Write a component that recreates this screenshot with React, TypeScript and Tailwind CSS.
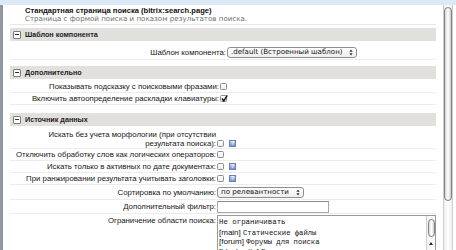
import React from 'react';

interface RowProps {
  label: React.ReactNode;
  labelWidth: string;
  height: string;
  align?: 'center' | 'end' | 'start';
  children?: React.ReactNode;
}

function Checkbox({ checked }: { checked?: boolean }) {
  return (
    <span className="relative inline-block w-[7px] h-[7px] border border-[#8c8c8c] rounded-[1.5px] bg-gradient-to-b from-white to-[#ececec] shrink-0">
      {checked && (
        <svg viewBox="0 0 10 10" className="absolute left-0 -top-[1px] w-[7px] h-[7px]">
          <path d="M1.5 5 L4 8.5 L9 0.5" fill="none" stroke="#111" strokeWidth="2" />
        </svg>
      )}
    </span>
  );
}

function Help() {
  return (
    <span className="inline-flex items-center justify-center w-[7px] h-[7px] ml-[5px] border border-[#6a80bd] bg-gradient-to-b from-[#c3cff0] to-[#7d93cf] text-white text-[5px] leading-none font-bold font-['Liberation_Sans',Arial,sans-serif] shrink-0">
      ?
    </span>
  );
}

function SectionBar({ title }: { title: string }) {
  return (
    <div className="h-[13px] bg-[#e1e0dd] flex items-center">
      <span className="ml-[3px] w-[8px] h-[8px] border border-[#7a7a7a] rounded-[1px] bg-white flex items-center justify-center">
        <span className="w-[4px] h-[1px] bg-[#333]" />
      </span>
      <span className="ml-[4px] text-[7.2px] leading-none font-bold text-[#1d1d1d]">{title}</span>
    </div>
  );
}

function Row({ label, labelWidth, height, align = 'center', children }: RowProps) {
  const items = align === 'end' ? 'items-end' : align === 'start' ? 'items-start' : 'items-center';
  return (
    <div className={`flex ${items} border-b border-[#ececec] ${height}`}>
      <div className={`${labelWidth} shrink-0 text-right text-[7.8px] leading-[9px] text-[#161616] whitespace-nowrap`}>
        {label}
      </div>
      <div className="flex items-center ml-[1px]">{children}</div>
    </div>
  );
}

function Select({ text, width }: { text: string; width: string }) {
  return (
    <div className={`${width} h-[11px] border border-[#8f8f8f] rounded-[3px] bg-gradient-to-b from-white to-[#eeeeee] flex items-center pl-[3px] pr-[3px]`}>
      <span className="flex-1 text-[7.1px] leading-none text-[#111] whitespace-nowrap font-['DejaVu_Sans',Verdana,sans-serif]">{text}</span>
      <svg viewBox="0 0 6 10" className="w-[4px] h-[7px]">
        <path d="M3 0.5 L5.5 4 L0.5 4 Z M3 9.5 L5.5 6 L0.5 6 Z" fill="#333" />
      </svg>
    </div>
  );
}

const section3 = 'w-[206px]';

export default function App() {
  return (
    <div className="w-[456px] h-[250px] overflow-hidden bg-white flex flex-col font-['Liberation_Sans',Arial,sans-serif]">
      <div className="h-[5px] bg-[#dce8f5] shrink-0" />
      <div className="flex flex-1 min-h-0">
        <div className="w-[3px] bg-[#8e97a2] shrink-0" />

        {/* Content */}
        <div className="w-[433px] pl-[7px] shrink-0">
          <div className="pt-[2px] pb-[1px] pl-[15px] border-b border-[#e6e6e6]">
            <div className="text-[7.6px] leading-[8px] font-bold text-[#111] whitespace-nowrap">
              Стандартная страница поиска (bitrix:search.page)
            </div>
            <div className="text-[7.1px] leading-[8px] text-[#6f6f6f] font-['DejaVu_Sans',Verdana,sans-serif] whitespace-nowrap">
              Страница с формой поиска и показом результатов поиска.
            </div>
          </div>

          {/* Шаблон компонента */}
          <div className="mt-[3px]">
            <SectionBar title="Шаблон компонента" />
            <div className="mt-[4px]">
              <Row label="Шаблон компонента:" labelWidth="w-[216px]" height="h-[15px]">
                <Select text=".default (Встроенный шаблон)" width="w-[130px]" />
              </Row>
            </div>
          </div>

          {/* Дополнительно */}
          <div className="mt-[6px]">
            <SectionBar title="Дополнительно" />
            <div className="mt-[2px]">
              <Row label="Показывать подсказку с поисковыми фразами:" labelWidth="w-[209px]" height="h-[12px]">
                <Checkbox />
              </Row>
              <Row label="Включить автоопределение раскладки клавиатуры:" labelWidth="w-[209px]" height="h-[12px]">
                <Checkbox checked />
              </Row>
            </div>
          </div>

          {/* Источник данных */}
          <div className="mt-[8px]">
            <SectionBar title="Источник данных" />
            <div className="mt-[2px]">
              <Row
                label={<>Искать без учета морфологии (при отсутствии<br />результата поиска):</>}
                labelWidth={section3}
                height="h-[21px]"
                align="end"
              >
                <div className="flex items-center mb-[1px]">
                  <Checkbox />
                  <Help />
                </div>
              </Row>
              <Row label="Отключить обработку слов как логических операторов:" labelWidth={section3} height="h-[12px]">
                <Checkbox />
              </Row>
              <Row label="Искать только в активных по дате документах:" labelWidth={section3} height="h-[12px]">
                <Checkbox />
                <Help />
              </Row>
              <Row label="При ранжировании результата учитывать заголовки:" labelWidth={section3} height="h-[12px]">
                <Checkbox />
                <Help />
              </Row>
              <Row label="Сортировка по умолчанию:" labelWidth={section3} height="h-[15px]">
                <Select text="по релевантности" width="w-[87px]" />
              </Row>
              <Row label="Дополнительный фильтр:" labelWidth={section3} height="h-[14px]">
                <div className="w-[112px] h-[12px] border border-[#a8a8a8] border-t-[#8a8a8a] bg-white" />
              </Row>
              <div className="flex items-start">
                <div className={`${section3} shrink-0 text-right text-[7.8px] leading-[9px] text-[#161616] pt-[2px] whitespace-nowrap`}>
                  Ограничение области поиска:
                </div>
                <div className="ml-[1px] mt-[1px] w-[219px] h-[44px] border border-[#9a9a9a] bg-white flex">
                  <div className="flex-1 pl-[1px] pt-[2px] text-[#111] whitespace-nowrap overflow-hidden">
                    <div className="h-[9.5px] leading-[9.5px] text-[7.4px] font-['Liberation_Mono',monospace]">Не ограничивать</div>
                    <div className="h-[9.5px] leading-[9.5px] text-[8px]">
                      [main] <span className="text-[7.2px] font-['Liberation_Mono',monospace]">Статические файлы</span>
                    </div>
                    <div className="h-[9.5px] leading-[9.5px] text-[8px]">
                      [forum] <span className="text-[7.2px] font-['Liberation_Mono',monospace]">Форумы для поиска</span>
                    </div>
                    <div className="h-[9.5px] leading-[9.5px] text-[8px]">
                      [block_site] <span className="text-[7.2px] font-['Liberation_Mono',monospace]">Блоки</span>
                    </div>
                  </div>
                  {/* list scrollbar */}
                  <div className="w-[9px] border-l border-[#d0d0d0] bg-gradient-to-r from-[#f3f3f3] to-white flex flex-col items-center pt-[3px]">
                    <div className="w-[7px] h-[18px] rounded-full border border-[#7f7f7f] bg-gradient-to-r from-[#d9d9d9] via-white to-[#cfcfcf]" />
                    <div className="mt-[5px] w-0 h-0 border-l-[2px] border-r-[2px] border-b-[3px] border-l-transparent border-r-transparent border-b-[#222]" />
                  </div>
                </div>
              </div>
            </div>
          </div>
        </div>

        <div className="w-[7px] shrink-0" />

        {/* Page scrollbar */}
        <div className="w-[10px] shrink-0 border-x border-[#cfcfcf] bg-gradient-to-r from-[#eeeeee] via-white to-[#eeeeee] pt-[2px]">
          <div className="h-[194px] rounded-full border border-[#808080] bg-gradient-to-r from-[#d6d6d6] via-white to-[#cdcdcd]" />
        </div>
        <div className="w-[3px] shrink-0 bg-white" />
      </div>
    </div>
  );
}
